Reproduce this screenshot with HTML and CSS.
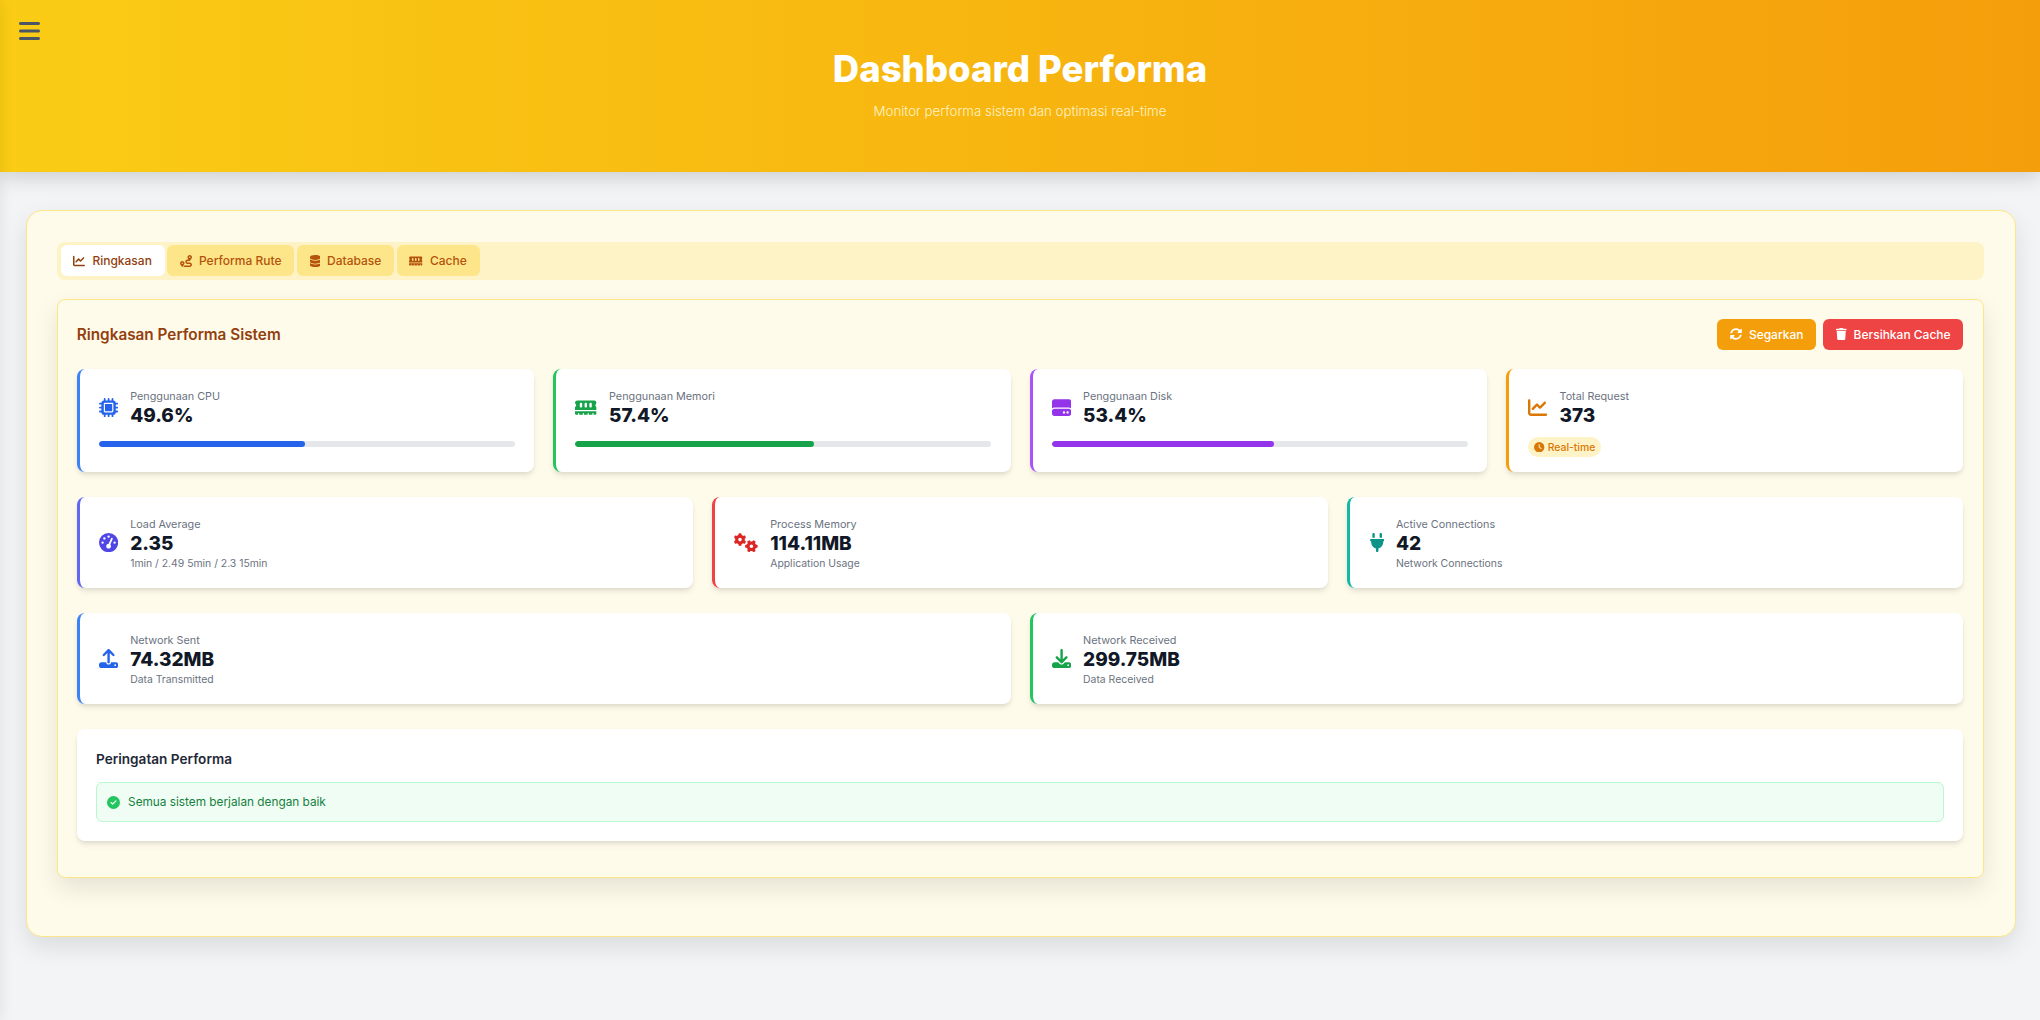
FILE: index.html
```html
<!DOCTYPE html>
<html lang="id">
<head>
  <meta charset="UTF-8">
  <meta name="viewport" content="width=device-width, initial-scale=1.0">
  <title>Dashboard Performa</title>
  <link rel="stylesheet" href="styles.css">
</head>
<body>
<aside class="sidebar"></aside>
<button class="menu-toggle" aria-label="Menu">
  <svg class="icon" viewBox="0 0 448 512"><path d="M0 96C0 78.3 14.3 64 32 64H416c17.7 0 32 14.3 32 32s-14.3 32-32 32H32C14.3 128 0 113.7 0 96zM0 256c0-17.7 14.3-32 32-32H416c17.7 0 32 14.3 32 32s-14.3 32-32 32H32c-17.7 0-32-14.3-32-32zM448 416c0 17.7-14.3 32-32 32H32c-17.7 0-32-14.3-32-32s14.3-32 32-32H416c17.7 0 32 14.3 32 32z"/></svg>
</button>

<header class="page-header">
  <h1>Dashboard Performa</h1>
  <p>Monitor performa sistem dan optimasi real-time</p>
</header>

<main class="outer-panel">
  <nav class="tabs">
    <button class="tab active">
      <svg class="icon" viewBox="0 0 512 512"><path d="M64 64c0-17.7-14.3-32-32-32S0 46.3 0 64V400c0 44.2 35.8 80 80 80H480c17.7 0 32-14.3 32-32s-14.3-32-32-32H80c-8.8 0-16-7.2-16-16V64zm406.6 86.6c12.5-12.5 12.5-32.8 0-45.3s-32.8-12.5-45.3 0L320 210.7l-57.4-57.4c-12.5-12.5-32.8-12.5-45.3 0l-112 112c-12.5 12.5-12.5 32.8 0 45.3s32.8 12.5 45.3 0L240 221.3l57.4 57.4c12.5 12.5 32.8 12.5 45.3 0l128-128z"/></svg>
      Ringkasan
    </button>
    <button class="tab">
      <svg class="icon" viewBox="0 0 512 512"><path d="M416 320h-96c-17.6 0-32-14.4-32-32s14.4-32 32-32h96s96-107 96-160-43-96-96-96-96 43-96 96c0 25.5 22.2 63.4 45.3 96H320c-52.9 0-96 43.1-96 96s43.1 96 96 96h96c17.6 0 32 14.4 32 32s-14.4 32-32 32H185.5c-16 24.8-33.8 47.7-47.3 64H416c52.9 0 96-43.1 96-96s-43.1-96-96-96zm0-256c17.7 0 32 14.3 32 32s-14.3 32-32 32-32-14.3-32-32 14.3-32 32-32zM96 256c-53 0-96 43-96 96s96 160 96 160 96-107 96-160-43-96-96-96zm0 128c-17.7 0-32-14.3-32-32s14.3-32 32-32 32 14.3 32 32-14.3 32-32 32z"/></svg>
      Performa Rute
    </button>
    <button class="tab">
      <svg class="icon" viewBox="0 0 448 512"><path d="M448 80v48c0 44.2-100.3 80-224 80S0 172.2 0 128V80C0 35.8 100.3 0 224 0S448 35.8 448 80zM393.2 214.7c20.8-7.4 39.9-16.9 54.8-28.6V288c0 44.2-100.3 80-224 80S0 332.2 0 288V186.1c14.9 11.8 34 21.2 54.8 28.6C99.7 230.7 159.5 240 224 240s124.3-9.3 169.2-25.3zM0 346.1c14.9 11.8 34 21.2 54.8 28.6C99.7 390.7 159.5 400 224 400s124.3-9.3 169.2-25.3c20.8-7.4 39.9-16.9 54.8-28.6V432c0 44.2-100.3 80-224 80S0 476.2 0 432V346.1z"/></svg>
      Database
    </button>
    <button class="tab">
      <svg class="icon" viewBox="0 0 576 512"><use href="#i-memory"/></svg>
      Cache
    </button>
  </nav>

  <section class="inner-panel">
    <div class="section-head">
      <h2>Ringkasan Performa Sistem</h2>
      <div class="actions">
        <button class="btn btn-amber">
          <svg class="icon" viewBox="0 0 512 512"><path d="M370.72 133.28C339.458 104.008 298.888 87.962 255.848 88c-77.458.068-144.328 53.178-162.791 126.85-1.344 5.363-6.122 9.15-11.651 9.15H24.103c-7.498 0-13.194-6.807-11.807-14.176C33.933 94.924 134.813 8 256 8c66.448 0 126.791 26.136 171.315 68.685L463.03 40.97C478.149 25.851 504 36.559 504 57.941V192c0 13.255-10.745 24-24 24H345.941c-21.382 0-32.09-25.851-16.971-40.971l41.75-41.749zM32 296h134.059c21.382 0 32.09 25.851 16.971 40.971l-41.75 41.75c31.262 29.273 71.835 45.319 114.876 45.28 77.418-.07 144.315-53.144 162.787-126.849 1.344-5.363 6.122-9.15 11.651-9.15h57.304c7.498 0 13.194 6.807 11.807 14.176C478.067 417.076 377.187 504 256 504c-66.448 0-126.791-26.136-171.315-68.685L48.97 471.03C33.851 486.149 8 475.441 8 454.059V320c0-13.255 10.745-24 24-24z"/></svg>
          Segarkan
        </button>
        <button class="btn btn-red">
          <svg class="icon" viewBox="0 0 448 512"><path d="M432 32H312l-9.4-18.7A24 24 0 0 0 281.1 0H166.8a23.72 23.72 0 0 0-21.4 13.3L136 32H16A16 16 0 0 0 0 48v32a16 16 0 0 0 16 16h416a16 16 0 0 0 16-16V48a16 16 0 0 0-16-16zM53.2 467a48 48 0 0 0 47.9 45h245.8a48 48 0 0 0 47.9-45L416 128H32z"/></svg>
          Bersihkan Cache
        </button>
      </div>
    </div>

    <div class="stat-row cols-4 with-footer">
      <div class="stat-card blue">
        <div class="stat-main">
          <svg class="icon stat-icon" viewBox="0 0 512 512"><path d="M176 24c0-13.3-10.7-24-24-24s-24 10.7-24 24V64c-35.3 0-64 28.7-64 64H24c-13.3 0-24 10.7-24 24s10.7 24 24 24H64v56H24c-13.3 0-24 10.7-24 24s10.7 24 24 24H64v56H24c-13.3 0-24 10.7-24 24s10.7 24 24 24H64c0 35.3 28.7 64 64 64v40c0 13.3 10.7 24 24 24s24-10.7 24-24V448h56v40c0 13.3 10.7 24 24 24s24-10.7 24-24V448h56v40c0 13.3 10.7 24 24 24s24-10.7 24-24V448c35.3 0 64-28.7 64-64h40c13.3 0 24-10.7 24-24s-10.7-24-24-24H448V280h40c13.3 0 24-10.7 24-24s-10.7-24-24-24H448V176h40c13.3 0 24-10.7 24-24s-10.7-24-24-24H448c0-35.3-28.7-64-64-64V24c0-13.3-10.7-24-24-24s-24 10.7-24 24V64H280V24c0-13.3-10.7-24-24-24s-24 10.7-24 24V64H176V24zM160 128H352c17.7 0 32 14.3 32 32V352c0 17.7-14.3 32-32 32H160c-17.7 0-32-14.3-32-32V160c0-17.7 14.3-32 32-32zm192 32H160V352H352V160z"/></svg>
          <div>
            <div class="stat-label">Penggunaan CPU</div>
            <div class="stat-value">49.6%</div>
          </div>
        </div>
        <div class="progress"><div class="progress-fill" style="width: 49.6%"></div></div>
      </div>
      <div class="stat-card green">
        <div class="stat-main">
          <svg class="icon stat-icon" viewBox="0 0 576 512"><use href="#i-memory"/></svg>
          <div>
            <div class="stat-label">Penggunaan Memori</div>
            <div class="stat-value">57.4%</div>
          </div>
        </div>
        <div class="progress"><div class="progress-fill" style="width: 57.4%"></div></div>
      </div>
      <div class="stat-card purple">
        <div class="stat-main">
          <svg class="icon stat-icon" viewBox="0 0 512 512"><path d="M0 96C0 60.7 28.7 32 64 32H448c35.3 0 64 28.7 64 64V280.4c-17-15.2-39.4-24.4-64-24.4H64c-24.6 0-47 9.2-64 24.4V96zM64 288H448c35.3 0 64 28.7 64 64v64c0 35.3-28.7 64-64 64H64c-35.3 0-64-28.7-64-64V352c0-35.3 28.7-64 64-64zM320 416a32 32 0 1 0 0-64 32 32 0 1 0 0 64zm128-32a32 32 0 1 0 -64 0 32 32 0 1 0 64 0z"/></svg>
          <div>
            <div class="stat-label">Penggunaan Disk</div>
            <div class="stat-value">53.4%</div>
          </div>
        </div>
        <div class="progress"><div class="progress-fill" style="width: 53.4%"></div></div>
      </div>
      <div class="stat-card amber">
        <div class="stat-main">
          <svg class="icon stat-icon" viewBox="0 0 512 512"><path d="M64 64c0-17.7-14.3-32-32-32S0 46.3 0 64V400c0 44.2 35.8 80 80 80H480c17.7 0 32-14.3 32-32s-14.3-32-32-32H80c-8.8 0-16-7.2-16-16V64zm406.6 86.6c12.5-12.5 12.5-32.8 0-45.3s-32.8-12.5-45.3 0L320 210.7l-57.4-57.4c-12.5-12.5-32.8-12.5-45.3 0l-112 112c-12.5 12.5-12.5 32.8 0 45.3s32.8 12.5 45.3 0L240 221.3l57.4 57.4c12.5 12.5 32.8 12.5 45.3 0l128-128z"/></svg>
          <div>
            <div class="stat-label">Total Request</div>
            <div class="stat-value">373</div>
          </div>
        </div>
        <div class="badge">
          <svg class="icon" viewBox="0 0 512 512"><path d="M256 0a256 256 0 1 1 0 512A256 256 0 1 1 256 0zM232 120V256c0 8 4 15.5 10.7 20l96 64c11 7.4 25.9 4.4 33.3-6.7s4.4-25.9-6.7-33.3L280 243.2V120c0-13.3-10.7-24-24-24s-24 10.7-24 24z"/></svg>
          Real-time
        </div>
      </div>
    </div>

    <div class="stat-row cols-3">
      <div class="stat-card indigo">
        <div class="stat-main">
          <svg class="icon stat-icon" viewBox="0 0 512 512"><path d="M0 256a256 256 0 1 1 512 0A256 256 0 1 1 0 256zM288 96a32 32 0 1 0 -64 0 32 32 0 1 0 64 0zM256 416c35.3 0 64-28.7 64-64c0-17.4-6.9-33.1-18.1-44.6L366 161.7c5.3-12.1-.2-26.3-12.3-31.6s-26.3 .2-31.6 12.3L257.9 288c-.6 0-1.3 0-1.9 0c-35.3 0-64 28.7-64 64s28.7 64 64 64zM176 144a32 32 0 1 0 -64 0 32 32 0 1 0 64 0zM96 288a32 32 0 1 0 0-64 32 32 0 1 0 0 64zm352-32a32 32 0 1 0 -64 0 32 32 0 1 0 64 0z"/></svg>
          <div>
            <div class="stat-label">Load Average</div>
            <div class="stat-value">2.35</div>
            <div class="stat-sub">1min / 2.49 5min / 2.3 15min</div>
          </div>
        </div>
      </div>
      <div class="stat-card red">
        <div class="stat-main">
          <svg class="icon stat-icon" viewBox="0 0 640 512"><path d="M308.5 135.3c7.1-6.3 9.9-16.2 6.2-25c-2.3-5.3-4.8-10.5-7.6-15.5L304 89.4c-3-5-6.3-9.9-9.8-14.6c-5.7-7.6-15.7-10.1-24.7-7.1l-28.2 9.3c-10.7-8.8-23-16-36.2-20.9L199 27.1c-1.9-9.3-9.1-16.7-18.5-17.8C173.9 8.4 167.2 8 160.4 8h-.7c-6.8 0-13.5 .4-20.1 1.2c-9.4 1.1-16.6 8.6-18.5 17.8L115 56.1c-13.3 5-25.5 12.1-36.2 20.9L50.5 67.8c-9-3-19-.5-24.7 7.1c-3.5 4.7-6.8 9.6-9.9 14.6l-3 5.3c-2.8 5-5.3 10.2-7.6 15.6c-3.7 8.7-.9 18.6 6.2 25l22.2 19.8C32.6 161.9 32 168.9 32 176s.6 14.1 1.7 20.9L11.5 216.7c-7.1 6.3-9.9 16.2-6.2 25c2.3 5.3 4.8 10.5 7.6 15.6l3 5.2c3 5.1 6.3 9.9 9.9 14.6c5.7 7.6 15.7 10.1 24.7 7.1l28.2-9.3c10.7 8.8 23 16 36.2 20.9l6.1 29.1c1.9 9.3 9.1 16.7 18.5 17.8c6.7 .8 13.5 1.2 20.4 1.2s13.7-.4 20.4-1.2c9.4-1.1 16.6-8.6 18.5-17.8l6.1-29.1c13.3-5 25.5-12.1 36.2-20.9l28.2 9.3c9 3 19 .5 24.7-7.1c3.5-4.7 6.8-9.5 9.8-14.6l3.1-5.4c2.8-5 5.3-10.2 7.6-15.5c3.7-8.7 .9-18.6-6.2-25l-22.2-19.8c1.1-6.8 1.7-13.8 1.7-20.9s-.6-14.1-1.7-20.9l22.2-19.8zM112 176a48 48 0 1 1 96 0 48 48 0 1 1 -96 0zM504.7 500.5c6.3 7.1 16.2 9.9 25 6.2c5.3-2.3 10.5-4.8 15.5-7.6l5.4-3.1c5-3 9.9-6.3 14.6-9.8c7.6-5.7 10.1-15.7 7.1-24.7l-9.3-28.2c8.8-10.7 16-23 20.9-36.2l29.1-6.1c9.3-1.9 16.7-9.1 17.8-18.5c.8-6.7 1.2-13.5 1.2-20.4s-.4-13.7-1.2-20.4c-1.1-9.4-8.6-16.6-17.8-18.5L583.9 307c-5-13.3-12.1-25.5-20.9-36.2l9.3-28.2c3-9 .5-19-7.1-24.7c-4.7-3.5-9.6-6.8-14.6-9.9l-5.3-3c-5-2.8-10.2-5.3-15.6-7.6c-8.7-3.7-18.6-.9-25 6.2l-19.8 22.2c-6.8-1.1-13.8-1.7-20.9-1.7s-14.1 .6-20.9 1.7l-19.8-22.2c-6.3-7.1-16.2-9.9-25-6.2c-5.3 2.3-10.5 4.8-15.6 7.6l-5.2 3c-5.1 3-9.9 6.3-14.6 9.9c-7.6 5.7-10.1 15.7-7.1 24.7l9.3 28.2c-8.8 10.7-16 23-20.9 36.2L315.1 313c-9.3 1.9-16.7 9.1-17.8 18.5c-.8 6.7-1.2 13.5-1.2 20.4s.4 13.7 1.2 20.4c1.1 9.4 8.6 16.6 17.8 18.5l29.1 6.1c5 13.3 12.1 25.5 20.9 36.2l-9.3 28.2c-3 9-.5 19 7.1 24.7c4.7 3.5 9.5 6.8 14.6 9.8l5.4 3.1c5 2.8 10.2 5.3 15.5 7.6c8.7 3.7 18.6 .9 25-6.2l19.8-22.2c6.8 1.1 13.8 1.7 21 1.7s14.1-.6 21-1.7l19.8 22.2zM464 304a48 48 0 1 1 0 96 48 48 0 1 1 0-96z"/></svg>
          <div>
            <div class="stat-label">Process Memory</div>
            <div class="stat-value">114.11MB</div>
            <div class="stat-sub">Application Usage</div>
          </div>
        </div>
      </div>
      <div class="stat-card teal">
        <div class="stat-main">
          <svg class="icon stat-icon" viewBox="0 0 384 512"><path d="M96 0C78.3 0 64 14.3 64 32v96h64V32c0-17.7-14.3-32-32-32zM288 0c-17.7 0-32 14.3-32 32v96h64V32c0-17.7-14.3-32-32-32zM32 160c-17.7 0-32 14.3-32 32s14.3 32 32 32v32c0 77.4 55 142 128 156.8V480c0 17.7 14.3 32 32 32s32-14.3 32-32V412.8C297 398 352 333.4 352 256V224c17.7 0 32-14.3 32-32s-14.3-32-32-32H32z"/></svg>
          <div>
            <div class="stat-label">Active Connections</div>
            <div class="stat-value">42</div>
            <div class="stat-sub">Network Connections</div>
          </div>
        </div>
      </div>
    </div>

    <div class="stat-row cols-2">
      <div class="stat-card blue">
        <div class="stat-main">
          <svg class="icon stat-icon" viewBox="0 0 512 512"><path d="M288 109.3V352c0 17.7-14.3 32-32 32s-32-14.3-32-32V109.3l-73.4 73.4c-12.5 12.5-32.8 12.5-45.3 0s-12.5-32.8 0-45.3l128-128c12.5-12.5 32.8-12.5 45.3 0l128 128c12.5 12.5 12.5 32.8 0 45.3s-32.8 12.5-45.3 0L288 109.3zM64 352H192c0 35.3 28.7 64 64 64s64-28.7 64-64H448c35.3 0 64 28.7 64 64v32c0 35.3-28.7 64-64 64H64c-35.3 0-64-28.7-64-64V416c0-35.3 28.7-64 64-64zM432 456a24 24 0 1 0 0-48 24 24 0 1 0 0 48z"/></svg>
          <div>
            <div class="stat-label">Network Sent</div>
            <div class="stat-value">74.32MB</div>
            <div class="stat-sub">Data Transmitted</div>
          </div>
        </div>
      </div>
      <div class="stat-card green">
        <div class="stat-main">
          <svg class="icon stat-icon" viewBox="0 0 512 512"><path d="M288 32c0-17.7-14.3-32-32-32s-32 14.3-32 32V274.7l-73.4-73.4c-12.5-12.5-32.8-12.5-45.3 0s-12.5 32.8 0 45.3l128 128c12.5 12.5 32.8 12.5 45.3 0l128-128c12.5-12.5 12.5-32.8 0-45.3s-32.8-12.5-45.3 0L288 274.7V32zM64 352c-35.3 0-64 28.7-64 64v32c0 35.3 28.7 64 64 64H448c35.3 0 64-28.7 64-64V416c0-35.3-28.7-64-64-64H346.5l-45.3 45.3c-25 25-65.5 25-90.5 0L165.5 352H64zm368 56a24 24 0 1 1 0 48 24 24 0 1 1 0-48z"/></svg>
          <div>
            <div class="stat-label">Network Received</div>
            <div class="stat-value">299.75MB</div>
            <div class="stat-sub">Data Received</div>
          </div>
        </div>
      </div>
    </div>

    <div class="alert-card">
      <h3>Peringatan Performa</h3>
      <div class="alert-ok">
        <svg class="icon" viewBox="0 0 512 512"><path d="M256 512A256 256 0 1 0 256 0a256 256 0 1 0 0 512zM369 209L241 337c-9.4 9.4-24.6 9.4-33.9 0l-64-64c-9.4-9.4-9.4-24.6 0-33.9s24.6-9.4 33.9 0l47 47L335 175c9.4-9.4 24.6-9.4 33.9 0s9.4 24.6 0 33.9z"/></svg>
        Semua sistem berjalan dengan baik
      </div>
    </div>
  </section>
</main>

<svg class="icon-defs" aria-hidden="true">
  <symbol id="i-memory" viewBox="0 0 576 512"><path d="M64 64C28.7 64 0 92.7 0 128v7.4c0 6.8 4.4 12.6 10.1 16.3C23.3 160.3 32 175.1 32 192s-8.7 31.7-21.9 40.3C4.4 236 0 241.8 0 248.6V320H576V248.6c0-6.8-4.4-12.6-10.1-16.3C552.7 223.7 544 208.9 544 192s8.7-31.7 21.9-40.3c5.7-3.7 10.1-9.5 10.1-16.3V128c0-35.3-28.7-64-64-64H64zM576 352H0v64c0 17.7 14.3 32 32 32H80V416c0-8.8 7.2-16 16-16s16 7.2 16 16v32h96V416c0-8.8 7.2-16 16-16s16 7.2 16 16v32h96V416c0-8.8 7.2-16 16-16s16 7.2 16 16v32h96V416c0-8.8 7.2-16 16-16s16 7.2 16 16v32h48c17.7 0 32-14.3 32-32V352zM192 160v64c0 17.7-14.3 32-32 32s-32-14.3-32-32V160c0-17.7 14.3-32 32-32s32 14.3 32 32zm128 0v64c0 17.7-14.3 32-32 32s-32-14.3-32-32V160c0-17.7 14.3-32 32-32s32 14.3 32 32zm128 0v64c0 17.7-14.3 32-32 32s-32-14.3-32-32V160c0-17.7 14.3-32 32-32s32 14.3 32 32z"/></symbol>
</svg>
</body>
</html>
```

FILE: styles.css
```css
* {
  box-sizing: border-box;
}

body {
  margin: 0;
  min-height: 100vh;
  overflow: hidden;
  font-family: "Inter", "Noto Sans", sans-serif;
  background-color: #f3f4f6;
  color: #111827;
}

button {
  font-family: inherit;
  border: none;
  cursor: pointer;
}

.icon {
  display: block;
  flex: none;
  height: 1em;
  width: auto;
  fill: currentColor;
}

.icon-defs {
  display: none;
}

/* off-canvas sidebar, only its shadow shows */
.sidebar {
  position: fixed;
  top: 0;
  left: -280px;
  width: 280px;
  height: 100vh;
  z-index: 20;
  background: #fff;
  box-shadow: 2px 0 12px rgba(0, 0, 0, 0.07);
}

.menu-toggle {
  position: fixed;
  top: 19px;
  left: 19px;
  z-index: 30;
  padding: 0;
  background: none;
  color: #4b5563;
  font-size: 24px;
}

.page-header {
  height: 172px;
  padding-top: 46px;
  text-align: center;
  color: #fff;
  background: linear-gradient(90deg, #facc15 0%, #f59e0b 100%);
  box-shadow: 0 4px 20px rgba(0, 0, 0, 0.18);
}

.page-header h1 {
  margin: 0;
  font-size: 36.5px;
  line-height: 46px;
  font-weight: 800;
}

.page-header p {
  margin: 8px 0 0;
  font-size: 13.3px;
  line-height: 22px;
  font-weight: 300;
  color: #fef3c7;
}

.outer-panel {
  margin: 38px 24.4px 0 25.6px;
  height: 727px;
  padding: 30.5px 31px 30.5px 30px;
  background-color: #fffbeb;
  border: 1.5px solid #fde68a;
  border-radius: 16px;
  box-shadow: 0 10px 25px rgba(0, 0, 0, 0.1);
}

.tabs {
  display: flex;
  gap: 2.5px;
  height: 38px;
  padding: 3.5px 4px;
  margin-bottom: 19px;
  background-color: #fef3c7;
  border-radius: 8px;
}

.tab {
  display: flex;
  align-items: center;
  gap: 7px;
  padding: 0 12.8px;
  font-size: 12px;
  font-weight: 500;
  color: #b45309;
  background-color: #fde68a;
  border-radius: 6px;
}

.tab.active {
  color: #92400e;
  background-color: #fff;
}

.inner-panel {
  height: 579px;
  padding: 19.2px 19.2px 0;
  background-color: #fffbeb;
  border: 1px solid #fde68a;
  border-radius: 8px;
  box-shadow: 0 10px 25px rgba(0, 0, 0, 0.1);
}

.section-head {
  display: flex;
  align-items: center;
  justify-content: space-between;
  margin-bottom: 19px;
}

.section-head h2 {
  margin: 0;
  font-size: 15.3px;
  font-weight: 600;
  color: #92400e;
}

.actions {
  display: flex;
  gap: 7px;
}

.btn {
  display: flex;
  align-items: center;
  gap: 7px;
  height: 31px;
  padding: 0 12.8px;
  font-size: 12px;
  font-weight: 500;
  color: #fff;
  border-radius: 6px;
}

.btn-amber {
  background-color: #f59e0b;
}

.btn-red {
  background-color: #ef4444;
}

.stat-row {
  display: grid;
  gap: 19.2px;
  margin-bottom: 25px;
}

.cols-4 {
  grid-template-columns: repeat(4, 1fr);
}

.cols-3 {
  grid-template-columns: repeat(3, 1fr);
}

.cols-2 {
  grid-template-columns: repeat(2, 1fr);
}

.stat-card {
  padding: 20px 19.2px 17px;
  background-color: #fff;
  border-left: 3px solid #3b82f6;
  border-radius: 8px;
  box-shadow: 0 4px 6px -1px rgba(0, 0, 0, 0.1), 0 2px 4px -1px rgba(0, 0, 0, 0.06);
}

.with-footer .stat-card {
  padding-bottom: 15px;
}

.stat-main {
  display: flex;
  align-items: center;
  gap: 12px;
}

.stat-icon {
  font-size: 19.2px;
  margin-bottom: 3px;
}

.stat-label {
  font-size: 10.8px;
  line-height: 16px;
  color: #6b7280;
}

.stat-value {
  margin: -1px 0 1px;
  font-size: 19px;
  line-height: 24px;
  font-weight: 800;
  color: #111827;
}

.stat-sub {
  font-size: 10.4px;
  line-height: 14px;
  color: #6b7280;
}

.progress {
  height: 6px;
  margin: 12px 0 10px;
  background-color: #e5e7eb;
  border-radius: 3px;
  overflow: hidden;
}

.progress-fill {
  height: 100%;
  border-radius: 3px;
}

.blue { border-left-color: #3b82f6; }
.blue .stat-icon { color: #2563eb; }
.blue .progress-fill { background-color: #2563eb; }

.green { border-left-color: #22c55e; }
.green .stat-icon { color: #16a34a; }
.green .progress-fill { background-color: #16a34a; }

.purple { border-left-color: #a855f7; }
.purple .stat-icon { color: #9333ea; }
.purple .progress-fill { background-color: #9333ea; }

.amber { border-left-color: #f59e0b; }
.amber .stat-icon { color: #d97706; }

.indigo { border-left-color: #6366f1; }
.indigo .stat-icon { color: #4f46e5; }

.red { border-left-color: #ef4444; }
.red .stat-icon { color: #dc2626; }

.teal { border-left-color: #14b8a6; }
.teal .stat-icon { color: #0d9488; }

.badge {
  display: inline-flex;
  align-items: center;
  gap: 3px;
  height: 20px;
  margin-top: 8.5px;
  padding: 0 6px;
  font-size: 10.4px;
  font-weight: 500;
  color: #d97706;
  background-color: #fef3c7;
  border-radius: 10px;
}

.alert-card {
  height: 112px;
  padding: 20.2px 19.2px 19.2px;
  background-color: #fff;
  border-radius: 8px;
  box-shadow: 0 4px 6px -1px rgba(0, 0, 0, 0.1), 0 2px 4px -1px rgba(0, 0, 0, 0.06);
}

.alert-card h3 {
  margin: 0 0 12px;
  font-size: 13.6px;
  line-height: 21px;
  font-weight: 600;
  color: #1f2937;
}

.alert-ok {
  display: flex;
  align-items: center;
  gap: 8.5px;
  height: 40px;
  padding: 0 9.6px;
  font-size: 11.8px;
  color: #15803d;
  background-color: #f0fdf4;
  border: 1px solid #bbf7d0;
  border-radius: 6px;
}

.alert-ok .icon {
  font-size: 13px;
  color: #22c55e;
}
```
